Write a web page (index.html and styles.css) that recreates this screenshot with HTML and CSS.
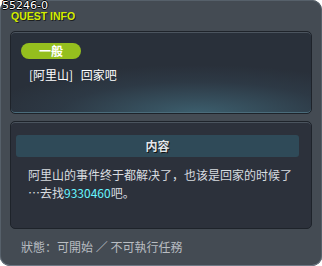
FILE: index.html
```html
<!DOCTYPE html>
<html lang="zh-CN">
  <head>
    <meta charset="UTF-8" />
    <title>Quest Info</title>
    <link rel="stylesheet" href="styles.css">
  </head>
  <body>
    <div class="window">
      <div class="quest-id">55246-0</div>
      <div class="window-title">QUEST INFO</div>

      <div class="panel summary">
        <div class="badge">一般</div>
        <div class="quest-name">[阿里山] 回家吧</div>
      </div>

      <div class="panel content">
        <div class="content-head">内容</div>
        <p class="content-text">
          阿里山的事件终于都解决了，也该是回家的时候了<br>⋯去找<span class="npc">9330460</span>吧。
        </p>
      </div>

      <div class="status">狀態：可開始 ／ 不可執行任務</div>
    </div>
  </body>
</html>
```

FILE: styles.css
```css
body {
  margin: 0;
  background: #ffffff;
  font-family: "Noto Sans CJK SC", "Liberation Sans", sans-serif;
}

.window {
  position: relative;
  width: 322px;
  height: 266px;
  box-sizing: border-box;
  padding: 31px 10px 0 10px;
  background: #444b53;
  border-radius: 10px;
  box-shadow: inset 0 -1px 0 #6d7884, inset 0 0 0 1px #56606a;
}

.quest-id {
  position: absolute;
  left: 2px;
  top: 1px;
  font-family: "DejaVu Sans", sans-serif;
  font-size: 11px;
  line-height: 9px;
  color: #ffffff;
  text-shadow: 1px 0 0 #000, -1px 0 0 #000, 0 1px 0 #000, 0 -1px 0 #000;
}

.window-title {
  position: absolute;
  left: 11px;
  top: 12px;
  font-family: "Liberation Sans", sans-serif;
  font-size: 10.5px;
  font-weight: bold;
  line-height: 9px;
  color: #d4ee00;
  text-shadow: 1px 1px 0 #1d2024;
}

.panel {
  box-sizing: border-box;
  border: 1px solid #1e232a;
  border-radius: 5px;
  box-shadow: inset 0 1px 0 #4b545e;
}

.summary {
  height: 83px;
  padding: 11px 0 0 10px;
  background: radial-gradient(ellipse 210px 48px at 62% 100%, #3c5e6d 0%, #2d3945 65%, #29303a 100%);
  box-shadow: inset 0 1px 0 #4b545e, inset 0 -1px 0 #4b6c7b;
}

.badge {
  width: 60px;
  height: 16px;
  line-height: 16px;
  text-align: center;
  background: #95bf1e;
  border-radius: 8px;
  color: #ffffff;
  font-size: 12px;
  font-weight: bold;
}

.quest-name {
  margin: 7px 0 0 8px;
  color: #ffffff;
  font-size: 12px;
  word-spacing: 5px;
}

.content {
  height: 108px;
  margin-top: 7px;
  padding: 13px 12px 0 5px;
  background: #2c313b;
}

.content-head {
  height: 22px;
  line-height: 22px;
  text-align: center;
  background: #2f4a58;
  border-radius: 3px;
  color: #e2e6ea;
  font-size: 12px;
  font-weight: bold;
  text-shadow: 1px 1px 0 #111;
}

.content-text {
  margin: 9px 0 0 12px;
  color: #d9dde0;
  font-size: 12px;
  line-height: 18px;
  white-space: nowrap;
}

.npc {
  color: #66f4ff;
}

.status {
  margin: 9px 0 0 11px;
  color: #b9bdc2;
  font-size: 12px;
}
```
